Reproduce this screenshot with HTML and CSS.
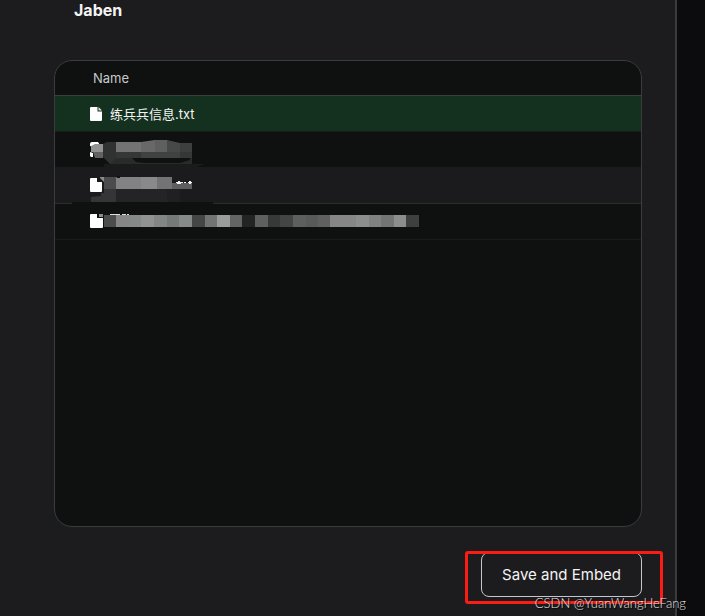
FILE: index.html
```html
<!DOCTYPE html>
<html lang="en">
<head>
    <meta charset="UTF-8">
    <meta name="viewport" content="width=device-width, initial-scale=1.0">
    <title>Jaben</title>
    <link rel="stylesheet" href="styles.css">
</head>
<body>
    <main class="panel">
        <h1>Jaben</h1>
        <div class="file-list">
            <table>
                <thead>
                    <tr><th>Name</th></tr>
                </thead>
                <tbody>
                    <tr class="selected">
                        <td>
                            <div class="file">
                                <svg class="file-icon" width="12" height="14" viewBox="0 0 12 14" aria-hidden="true">
                                    <path fill="#fff" d="M1 0h6.500v4.500H12V13a1 1 0 0 1-1 1H1a1 1 0 0 1-1-1V1a1 1 0 0 1 1-1z"/>
                                    <path fill="#dbe3de" d="M8.500 0 12 3.500H8.500z"/>
                                </svg>
                                <span>练兵兵信息.txt</span>
                            </div>
                        </td>
                    </tr>
                    <tr>
                        <td>
                            <svg class="redacted" width="340" height="35" viewBox="0 0 340 35" aria-hidden="true">
                                <path fill="#fff" d="M0 12q0-2 2-2h6l2 3-6 2-4-1zM0 20l3 1v4H1l-1-1z"/>
                                <path fill="#929292" d="M1 14l4-2h8v8H1z"/>
                                <path fill="#626262" d="M3 20h10v6H5z"/>
                                <path fill="#303231" d="M13 12l4-2h9v22h-6l-7-7z"/>
                                <path fill="#737373" d="M26 10h25v10H26z"/>
                                <path fill="#676867" d="M51 10l14-2v12H51z"/>
                                <path fill="#5e5f5e" d="M65 8h12v12H65z"/>
                                <path fill="#474848" d="M77 8l13 3v9H77z"/>
                                <path fill="#3d3e3e" d="M90 11h12v9H90z"/>
                                <path fill="#353737" d="M26 20h25v6H26z"/>
                                <path fill="#404141" d="M51 20h39v6H51z"/>
                                <path fill="#353636" d="M90 20h12v6H90z"/>
                                <path fill="#292a2a" d="M26 26h76v6H20z"/>
                                <path fill="#0e1110" d="M42 26h58v2l-10 3H55l-9-1z"/>
                                <path fill="#1a1b1c" d="M14 32h101l-12 4H14z"/>
                            </svg>
                        </td>
                    </tr>
                    <tr class="striped">
                        <td>
                            <svg class="redacted" width="340" height="35" viewBox="0 1 340 35" aria-hidden="true">
                                <path fill="#fff" d="M1 11h7l4 4v9q0 1-1 1H1q-1 0-1-1V12q0-1 1-1z"/>
                                <path fill="#18191a" d="M7 10l3 1 4 6h-2v-2H7z"/>
                                <path fill="#8b8b8b" d="M10 10h4v5l-4-4z"/>
                                <path fill="#4b4b4d" d="M14 10h12v12H14z"/>
                                <path fill="#828284" d="M26 10h25v12H26z"/>
                                <path fill="#89898b" d="M51 10h16v12H51z"/>
                                <path fill="#737375" d="M67 10h15v12H67z"/>
                                <path fill="#5e5e60" d="M82 16h20v6H82z"/>
                                <path fill="#111" d="M26 9h4v2h-3z"/>
                                <path fill="#f2f2f2" d="M86 15h2v-1h2v1h3v1h-2v1h-4v-1h-1zM94 15h2v1h-2zM98 15h1v-1h2v1h1v1h-1v1h-2v-1h-1z"/>
                                <path fill="#353537" d="M14 22h12v13H1v-5l10-1v-3h3z"/>
                                <path fill="#242426" d="M26 22h51v13H26z"/>
                                <path fill="#202022" d="M77 22h13v13H77z"/>
                            </svg>
                        </td>
                    </tr>
                    <tr>
                        <td>
                            <svg class="redacted" width="340" height="35" viewBox="0 1 340 35" aria-hidden="true">
                                <path fill="#0e1110" d="M-18-1h141v10H-18z"/>
                                <path fill="#fff" d="M1 11h6v4h6v9q0 1-1 1H1q-1 0-1-1V12q0-1 1-1z"/>
                                <path fill="#8a8d8c" d="M9 11h4v3H9z"/>
                                <path fill="#4a4d4b" d="M14 12h12v12H14z"/>
                                <path fill="#858685" d="M26 12h13v12H26z"/>
                                <path fill="#858988" d="M39 12h12v12H39z"/>
                                <path fill="#909392" d="M51 12h13v12H51z"/>
                                <path fill="#828684" d="M64 12h13v12H64z"/>
                                <path fill="#757a77" d="M77 12h12v12H77z"/>
                                <path fill="#868a88" d="M89 12h13v12H89z"/>
                                <path fill="#454545" d="M102 12h13v12h-13z"/>
                                <path fill="#707573" d="M115 12h12v12h-12z"/>
                                <path fill="#999c9b" d="M127 12h13v12h-13z"/>
                                <path fill="#646465" d="M140 12h12v12h-12z"/>
                                <path fill="#212423" d="M152 12h13v12h-13z"/>
                                <path fill="#5d605f" d="M165 12h13v12h-13z"/>
                                <path fill="#363938" d="M178 12h12v12h-12z"/>
                                <path fill="#424544" d="M190 12h13v12h-13z"/>
                                <path fill="#5c5f5e" d="M203 12h13v12h-13z"/>
                                <path fill="#565a58" d="M216 12h12v12h-12z"/>
                                <path fill="#616061" d="M228 12h12v12h-12z"/>
                                <path fill="#868686" d="M240 12h26v12h-26z"/>
                                <path fill="#8b8e8d" d="M266 12h13v12h-13z"/>
                                <path fill="#7e8280" d="M279 12h12v12h-12z"/>
                                <path fill="#757475" d="M291 12h13v12h-13z"/>
                                <path fill="#8b8e8d" d="M304 12h12v12h-12z"/>
                                <path fill="#3d403f" d="M316 12h13v12h-13z"/>
                                <path fill="#dedede" d="M20 11h10v1H20zM32 11h4v1h-4zM37 11h2v1h-2z"/>
                            </svg>
                        </td>
                    </tr>
                </tbody>
            </table>
        </div>
        <div class="actions">
            <button type="button" class="save-btn">Save and Embed</button>
            <div class="highlight"></div>
        </div>
    </main>
    <div class="watermark">CSDN @YuanWangHeFang</div>
</body>
</html>
```

FILE: styles.css
```css
* {
    box-sizing: border-box;
}
body {
    margin: 0;
    min-height: 100vh;
    padding-right: 28px;
    background-color: #0c0c0e;
    color: #f4f4f4;
    font-family: Inter, "Noto Sans CJK SC", sans-serif;
}
.panel {
    min-height: 100vh;
    padding: 0 33px 18px 54px;
    background-color: #1c1c1e;
    border-right: 2px solid #3b3b3d;
}
h1 {
    margin: 0;
    padding-left: 20px;
    height: 60px;
    font-size: 16px;
    line-height: 20px;
    font-weight: 700;
}
.file-list {
    min-height: 467px;
    background-color: #0e1110;
    border: 1px solid #3b3c3d;
    border-radius: 18px;
    overflow: hidden;
}
table {
    width: 100%;
    border-collapse: separate;
    border-spacing: 0;
}
th {
    height: 35px;
    padding: 0 38px;
    border-bottom: 1px solid #3b3e3d;
    color: #c8c9c9;
    font-size: 13px;
    font-weight: 400;
    text-align: left;
}
td {
    height: 36px;
    padding: 0 35px;
    border-bottom: 1px solid #191c1b;
}
.selected td {
    background-color: #14301f;
}
.striped td {
    background-color: #1b1b1d;
    border-bottom-color: #2b2c2d;
}
.file {
    display: flex;
    align-items: center;
    gap: 8px;
    font-size: 13px;
    line-height: 20px;
}
.file-icon {
    flex: none;
}
.redacted {
    display: block;
    overflow: visible;
}
.actions {
    position: relative;
    display: flex;
    justify-content: flex-end;
    padding-top: 25px;
}
.save-btn {
    height: 45px;
    padding: 0 20px;
    background-color: transparent;
    border: 1px solid #c3c6cc;
    border-radius: 8px;
    color: #f4f4f4;
    font-family: inherit;
    font-size: 15px;
}
.highlight {
    position: absolute;
    top: 24px;
    right: -21px;
    width: 198px;
    height: 53px;
    border: 3px solid #fb1d14;
    border-radius: 3px;
    pointer-events: none;
}
.watermark {
    position: absolute;
    right: 19px;
    bottom: 4px;
    color: #e4e4e4;
    font-family: Lato, sans-serif;
    font-size: 13px;
    font-weight: 300;
    line-height: 18px;
    text-shadow: 1px 1px 1px #000;
}
```
